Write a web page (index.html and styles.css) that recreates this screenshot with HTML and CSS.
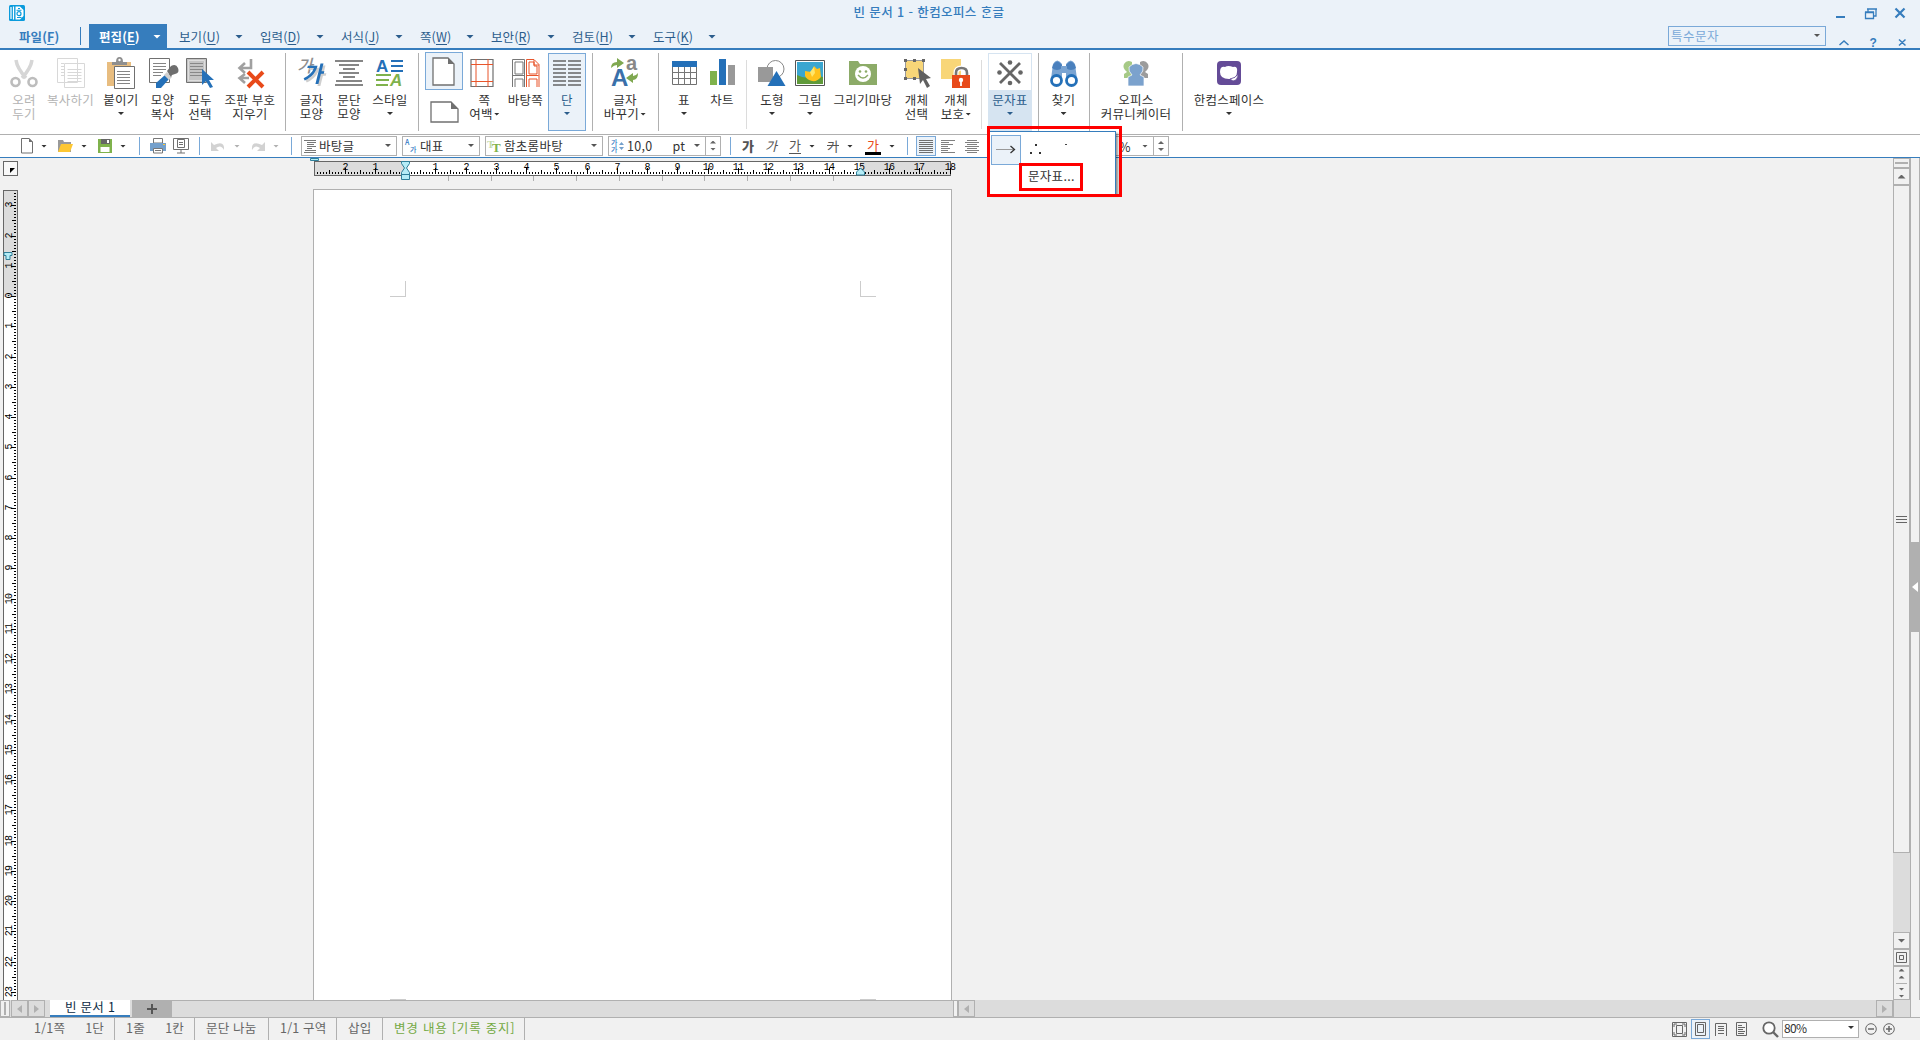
FILE: index.html
```
<!DOCTYPE html>
<html lang="ko">

<head>
  <meta charset="UTF-8">
  <meta name="viewport" content="width=device-width, initial-scale=1.0">
  <title>빈 문서 1 - 한컴오피스 ᄒᆞᆫ글</title>
  <link rel="stylesheet" href="styles.css">
</head>

<body>
  <div class="app">

    <!-- Title bar + menu -->
    <header class="header">
      <svg class="logo" width="16" height="16" viewBox="0 0 16 16">
        <rect width="16" height="16" rx="1.5" fill="#0a9bdc"/>
        <path d="M2 2v12M4.500 1.500v13" stroke="#fff" stroke-width="1.200"/>
        <path d="M6.500 1.500h4.500l3.500 3.500v6l-3.500 3.500h-4.500z" fill="#fff"/>
        <path d="M9 3.500h2M7.500 5.300h5M8 12.500h4.500" stroke="#0a9bdc" stroke-width="1.100"/>
        <circle cx="10" cy="8.700" r="2" fill="none" stroke="#0a9bdc" stroke-width="1.200"/>
      </svg>
      <div class="title">빈 문서 1 - 한컴오피스 ᄒᆞᆫ글</div>
      <nav class="menu">
        <span class="file">파일(<u>F</u>)</span>
        <span class="item active">편집(<u>E</u>)<i class="caret big"></i></span>
        <span class="item">보기(<u>U</u>)<i class="caret big"></i></span>
        <span class="item">입력(<u>D</u>)<i class="caret big"></i></span>
        <span class="item">서식(<u>J</u>)<i class="caret big"></i></span>
        <span class="item">쪽(<u>W</u>)<i class="caret big"></i></span>
        <span class="item">보안(<u>R</u>)<i class="caret big"></i></span>
        <span class="item">검토(<u>H</u>)<i class="caret big"></i></span>
        <span class="item">도구(<u>K</u>)<i class="caret big"></i></span>
      </nav>
      <div class="help-search">특수문자<i class="caret"></i></div>
      <svg class="win" width="76" height="48" viewBox="0 0 76 48" fill="none" stroke="#367dbd">
        <path d="M0 17h9" stroke-width="2"/>
        <path d="M32 12V9h8v7h-3M29.500 12.500h8v6h-8zM31 9h10M29 12h9" stroke-width="1.300"/>
        <path d="M59.500 8.500l9 9M68.500 8.500l-9 9" stroke-width="2.200"/>
        <path d="M3.500 45l4.500-4 4.500 4M63 39.500l6.500 6M69.500 39.500l-6.500 6" stroke-width="1.500"/>
        <text x="33.500" y="46.500" class="qmark">?</text>
      </svg>
    </header>

    <!-- Ribbon -->
    <div class="ribbon">
      <div class="btn off">
        <svg width="30" height="32" viewBox="0 0 30 32" fill="none"><path d="M7 3q1 8 10 18M23 3q-1 8-10 18" stroke="#d6d6d6" stroke-width="3.500"/><circle cx="6.500" cy="25" r="4" stroke="#bdbdbd" stroke-width="2.600"/><circle cx="23.500" cy="25" r="4" stroke="#bdbdbd" stroke-width="2.600"/></svg>
        오려<br>두기
      </div>
      <div class="btn off">
        <svg width="28" height="32" viewBox="0 0 28 32" fill="#fff" stroke="#d8d8d8"><path d="M.5 1.500h20v24H.5zM4 6.500h3M4 9.500h3M4 12.500h3M4 15.500h3M4 18.500h3M7.500 6.500h20v24h-20zM10.500 12.500h14M10.500 15.500h14M10.500 18.500h14M10.500 21.500h14M10.500 24.500h14"/></svg>
        복사하기
      </div>
      <div class="btn">
        <svg width="28" height="32" viewBox="0 0 28 32"><path d="M0 5h24v24H0z" fill="#e8bd80"/><path d="M5 8V5h4q0-5 3.500-5T16 5h4v3z" fill="#8f8f8f"/><circle cx="12.500" cy="3" r="1.200" fill="#fff"/><path d="M7.500 9.500h20v22h-20z" fill="#fff" stroke="#707070"/><path d="M10 14.500h13M10 17.500h13M10 20.500h13M10 23.500h13M10 26.500h13" stroke="#858585"/></svg>
        붙이기<i class="caret"></i>
      </div>
      <div class="btn">
        <svg width="30" height="32" viewBox="0 0 30 32"><path d="M1.500 1.500h20v24h-20z" fill="#fff" stroke="#707070"/><path d="M5 6.500h13M5 9.500h13M5 12.500h13M5 15.500h10M5 18.500h8" stroke="#858585"/><path d="M8 31v-5l9-8 4 4-8 9z" fill="#2470b8"/><path d="M16 18l3-3 5 5-3 3z" fill="#d0d0d0"/><path d="M19 14l4-5q5-3 7 2t-3 6l-3 1-1 2z" fill="#6e6e6e"/></svg>
        모양<br>복사
      </div>
      <div class="btn">
        <svg width="28" height="32" viewBox="0 0 28 32"><path d="M.5 1.500h20v24H.5z" fill="#c4c4c4" stroke="#707070"/><path d="M4 6.500h13M4 9.500h13M4 12.500h13M4 15.500h12M4 18.500h12" stroke="#888"/><path d="M2.500 3.500h16v20h-16z" fill="none" stroke="#dedede"/><path d="M16 12l12 11h-5l4 7-3 1-4-7-4 4z" fill="#2470b8"/></svg>
        모두<br>선택
      </div>
      <div class="btn">
        <svg width="28" height="32" viewBox="0 0 28 32" fill="none"><path d="M15 2v9H4M9 6l-5.500 5L9 16M13 21H4M9 17l-5.500 4L9 26" stroke="#a0a0a0" stroke-width="2.600"/><path d="M12 15l15 15M27 15L12 30" stroke="#e84a1a" stroke-width="4"/></svg>
        조판 부호<br>지우기
      </div>
      <div class="sep"></div>
      <div class="btn">
        <svg width="30" height="32" viewBox="0 0 30 32"><text x="0" y="15" class="ga gray">가</text><text x="5" y="25" class="ga blue">가</text></svg>
        글자<br>모양
      </div>
      <div class="btn">
        <svg width="28" height="32" viewBox="0 0 28 32"><path d="M0 4h28M4 8h20M8 12h12M4 16h20M8 20h12M1 24h26M0 28h28" stroke="#5f5f5f" stroke-width="1.700"/></svg>
        문단<br>모양
      </div>
      <div class="btn">
        <svg width="28" height="32" viewBox="0 0 28 32"><text x="0" y="15" class="style-a">A</text><text x="14" y="29" class="style-b">A</text><path d="M15 4h12M15 9h12M15 14h12" stroke="#2470b8" stroke-width="2"/><path d="M0 18h15M0 23h13M0 28h12" stroke="#7fb24c" stroke-width="2"/></svg>
        스타일<i class="caret"></i>
      </div>
      <div class="sep"></div>
      <div class="pages">
        <div class="portrait"><svg width="24" height="30" viewBox="0 0 24 30"><path d="M1 1h15l6 6v21H1z" fill="#fff" stroke="#707070" stroke-width="1.300"/><path d="M16 1v6h6z" fill="#707070"/></svg></div>
        <svg width="29" height="24" viewBox="0 0 29 24"><path d="M1 1h20l7 7v13H1z" fill="#fff" stroke="#707070" stroke-width="1.300"/><path d="M21 1v7h7z" fill="#707070"/></svg>
      </div>
      <div class="btn">
        <svg class="nudge" width="24" height="32" viewBox="0 0 24 32" fill="none"><path d="M1 2.500h22v27H1z" stroke="#707070" stroke-width="1.200"/><path d="M6 2v28M18 2v28M1 7.500h22M1 24.500h22" stroke="#e8552b"/></svg>
        쪽<br><span class="row">여백<i class="caret"></i></span>
      </div>
      <div class="btn">
        <svg width="28" height="32" viewBox="0 0 28 32" fill="none"><path d="M.5 30V2.500h12V30M.5 18.500h12M3 5h8v12H3zM3 30v-8h8v8" stroke="#777"/><path d="M14.500 30V2.500H22l5 5V30M14.500 18.500h12M17 5h5v4h3v8h-8zM17 30v-8h8v8M22 3v5h5" stroke="#e8552b"/></svg>
        바탕쪽
      </div>
      <div class="btn picked">
        <svg width="28" height="32" viewBox="0 0 28 32"><path d="M0 4h13M15 4h13M0 8h13M15 8h13M0 12h13M15 12h13M0 16h13M15 16h13M0 20h13M15 20h13M0 24h13M15 24h13M0 28h13M15 28h13" stroke="#666" stroke-width="1.700"/></svg>
        단<i class="caret"></i>
      </div>
      <div class="sep"></div>
      <div class="btn">
        <svg width="28" height="32" viewBox="0 0 28 32"><text x="0" y="29" class="chg-a">A</text><text x="15" y="13" class="chg-b">a</text><path d="M0 11q0-6 6-6V1l7 5-7 5V8q-3 0-6 3z" fill="#7fa850"/><path d="M27 16q0 7-5 7v3l-7-5 7-5v3q3 0 5-3z" fill="#7fa850"/></svg>
        글자<br><span class="row">바꾸기<i class="caret"></i></span>
      </div>
      <div class="sep"></div>
      <div class="btn">
        <svg width="25" height="32" viewBox="0 0 25 32"><path d="M.5 4.500h24v23H.5z" fill="#fff" stroke="#707070"/><path d="M0 15.500h25M0 21.500h25M6.500 10v18M12.500 10v18M18.500 10v18" stroke="#777"/><path d="M0 4h25v6H0z" fill="#2470b8"/></svg>
        표<i class="caret"></i>
      </div>
      <div class="btn">
        <svg width="25" height="32" viewBox="0 0 25 32"><path d="M0 14h7v14H0z" fill="#7fb24c"/><path d="M9 2h7v26H9z" fill="#2470b8"/><path d="M18 8h7v20h-7z" fill="#999"/></svg>
        차트
      </div>
      <div class="sep light"></div>
      <div class="btn">
        <svg width="28" height="32" viewBox="0 0 28 32"><circle cx="17.500" cy="12" r="8.500" fill="#fff" stroke="#888"/><path d="M0 10h15v15H0z" fill="#999"/><path d="M18.500 14l9 15h-18z" fill="#2470b8"/></svg>
        도형<i class="caret"></i>
      </div>
      <div class="btn">
        <svg width="30" height="32" viewBox="0 0 30 32"><path d="M.5 3.500h29v25H.5z" fill="#fff" stroke="#555"/><path d="M2 5h26v22H2z" fill="#3aa6d0"/><path d="M2 18q8 4 14 2t12 0v7H2z" fill="#5f9a3a"/><path d="M10 14l6 1 3-6 3 3 3-1 1 9q-4 5-9 4t-7-5z" fill="#ffc21d"/><path d="M15 15l4-5 1 6-3 4" fill="#ffe66b"/></svg>
        그림<i class="caret"></i>
      </div>
      <div class="btn">
        <svg width="28" height="32" viewBox="0 0 28 32"><path d="M0 4h9l2 3h17v21H0z" fill="#8cab68"/><circle cx="14" cy="17" r="8" fill="#fff"/><circle cx="11" cy="14.500" r="1.300" fill="#8cab68"/><circle cx="17" cy="14.500" r="1.300" fill="#8cab68"/><path d="M9 18q5 6 10 0" fill="none" stroke="#8cab68" stroke-width="1.400"/></svg>
        그리기마당
      </div>
      <div class="btn">
        <svg width="28" height="32" viewBox="0 0 28 32"><path d="M2.500 3.500h18v18h-18z" fill="#f8d678" stroke="#999"/><path d="M1 2h3v3H1zM10 2h3v3h-3zM19 2h3v3h-3zM1 11h3v3H1zM1 20h3v3H1zM10 20h3v3h-3z" fill="#666"/><path d="M15 11l13 10-5 1 4 7-3 2-4-8-3 4z" fill="#606060"/></svg>
        개체<br>선택
      </div>
      <div class="btn">
        <svg width="30" height="32" viewBox="0 0 30 32"><path d="M0 2h20v20H0z" fill="#f8d678"/><path d="M15 19v-3q0-5 5.500-5t5.500 5v3" fill="none" stroke="#fff" stroke-width="5"/><path d="M15 19v-3q0-5 5.500-5t5.500 5v3" fill="none" stroke="#777" stroke-width="2.600"/><path d="M11 18h18v13H11z" fill="#e84a1a"/><circle cx="20" cy="23" r="2.200" fill="#fff"/><path d="M20 23v6" stroke="#fff" stroke-width="1.800"/></svg>
        개체<br><span class="row">보호<i class="caret"></i></span>
      </div>
      <div class="sep light"></div>
      <div class="btn hover">
        <svg width="26" height="32" viewBox="0 0 26 32"><path d="M3 6l20 20M23 6L3 26" stroke="#666" stroke-width="2.800"/><g fill="#666"><circle cx="13" cy="5.500" r="2.300"/><circle cx="13" cy="26" r="2.300"/><circle cx="2.500" cy="15.500" r="2.300"/><circle cx="23.500" cy="15.500" r="2.300"/></g></svg>
        문자표<i class="caret"></i>
      </div>
      <div class="sep"></div>
      <div class="btn">
        <svg width="28" height="32" viewBox="0 0 28 32"><path d="M3 7q4-7 9 0v15H1zM25 7q-4-7-9 0v15h11z" fill="#7aa4d2"/><path d="M3 8q4-7 9 0v3q-5 4-10 0zM25 8q-4-7-9 0v3q5 4 10 0z" fill="#4a80bd"/><path d="M11 9h6v7h-6z" fill="#7aa4d2"/><circle cx="6.500" cy="23.500" r="5" fill="#fff" stroke="#2470b8" stroke-width="2.800"/><circle cx="21.500" cy="23.500" r="5" fill="#fff" stroke="#2470b8" stroke-width="2.800"/></svg>
        찾기<i class="caret"></i>
      </div>
      <div class="sep"></div>
      <div class="btn">
        <svg width="28" height="32" viewBox="0 0 28 32"><path d="M2 21v-4l3-2q-5-4-3-8 3-5 8-2v16z" fill="#a6c986"/><path d="M26 21v-4l-3-2q5-4 3-8-3-5-8-2v16z" fill="#9c9c9c"/><path d="M6 29v-9l4-2q-4-4-3-8 7-7 14 0 1 4-3 8l4 2v9z" fill="#7ba2cd" stroke="#fff" stroke-width=".7"/></svg>
        오피스<br>커뮤니케이터
      </div>
      <div class="sep"></div>
      <div class="btn">
        <svg width="24" height="32" viewBox="0 0 24 32"><rect y="4" width="24" height="24" rx="4" fill="#644b97"/><path d="M3 15q0-6 5-5 3-2 8 0 5-1 4 5 0 7-8 7-9 0-9-7z" fill="#fff"/><path d="M13 22q6-1 8-5 0 6-5 7z" fill="#fff" stroke="#644b97" stroke-width=".8"/></svg>
        한컴스페이스<i class="caret"></i>
      </div>
    </div>

    <!-- Formatting bar -->
    <div class="tools">
      <div class="tool"><svg width="12" height="16" viewBox="0 0 12 16"><path d="M.5.500H8L11.500 4v11H.5z" fill="#fff" stroke="#707070"/><path d="M8 0v4h4z" fill="#707070"/></svg><i class="caret"></i></div>
      <div class="tool"><svg width="15" height="14" viewBox="0 0 15 14"><path d="M0 1h5l1 2h7v10H0z" fill="#999"/><path d="M3 5h12l-3 8H0z" fill="#fdc733"/></svg><i class="caret"></i></div>
      <div class="tool"><svg width="14" height="14" viewBox="0 0 14 14"><path d="M0 0h14v14H0z" fill="#7fb24c"/><path d="M3 0h9v5H3z" fill="#666"/><path d="M9 1h2v3H9z" fill="#fff"/><path d="M2.500 8h9v5h-9z" fill="#fff"/></svg><i class="caret"></i></div>
      <div class="bar"></div>
      <div class="tool"><svg width="16" height="16" viewBox="0 0 16 16"><path d="M3.500.500h9V5h-9z" fill="#fff" stroke="#777"/><path d="M0 5h16v8H0z" fill="#74a0cc"/><path d="M3.500 10.500h9v4.500h-9z" fill="#fff" stroke="#777"/><path d="M5 12.500h6" stroke="#777"/><path d="M13 6h2v1h-2z" fill="#fdc733"/></svg></div>
      <div class="tool"><svg width="16" height="16" viewBox="0 0 16 16" fill="none" stroke="#707070"><path d="M.5.500h15v11H.5zM4.500 1.500h7v8h-7zM6 4.500h4M6 6.500h4M8 12v3M4 15h8"/></svg></div>
      <div class="bar"></div>
      <div class="tool dim"><svg width="15" height="12" viewBox="0 0 15 12"><path d="M0 2v9h8L5 8q5-4 8 2Q14 0 3 5z" fill="#d2d2d2"/></svg><i class="caret"></i></div>
      <div class="tool dim"><svg width="15" height="12" viewBox="0 0 15 12"><path d="M15 2v9H7l3-3Q5 4 2 10 1 0 12 5z" fill="#d2d2d2"/></svg><i class="caret"></i></div>
      <div class="bar"></div>
      <div class="combo c-style"><svg width="13" height="14" viewBox="0 0 13 14"><path d="M0 1.500h12M3 3.500h9M3 5.500h7M3 7.500h9M3 9.500h5M1 11.500h11M0 13.500h12" stroke="#777"/></svg>바탕글<i class="caret"></i></div>
      <div class="combo c-lang"><svg width="13" height="14" viewBox="0 0 13 14"><text x="0" y="6" class="mini">A</text><text x="5" y="13" class="mini">가</text></svg>대표<i class="caret"></i></div>
      <div class="combo c-font"><svg width="14" height="14" viewBox="0 0 14 14"><text x="-1" y="9" class="tt pale">T</text><text x="4" y="13" class="tt">T</text></svg>함초롬바탕<i class="caret"></i></div>
      <div class="combo c-size"><svg width="14" height="14" viewBox="0 0 14 14"><text x="0" y="6" class="mini">가</text><text x="0" y="13" class="mini">가</text><path d="M8 6l2.500-3L13 6zM8 8h5l-2.500 3z" fill="#74a0cc"/></svg>10,0<span class="pt">pt</span><i class="caret"></i><span class="spin"><i class="caret up"></i><i class="caret"></i></span></div>
      <div class="bar"></div>
      <div class="tool ch"><b>가</b></div>
      <div class="tool ch"><em>가</em></div>
      <div class="tool ch"><span class="under">가</span><i class="caret"></i></div>
      <div class="tool ch"><s>가</s><i class="caret"></i></div>
      <div class="tool ch"><span class="color">가</span><i class="caret"></i></div>
      <div class="bar"></div>
      <div class="tool align on"><svg width="14" height="14" viewBox="0 0 14 14"><path d="M0 1.500h14M0 3.500h14M0 5.500h14M0 7.500h14M0 9.500h14M0 11.500h14M0 13.500h14" stroke="#707070"/></svg></div>
      <div class="tool"><svg width="14" height="14" viewBox="0 0 14 14"><path d="M0 1.500h14M0 3.500h8M0 5.500h12M0 7.500h7M0 9.500h9M0 11.500h7M0 13.500h14" stroke="#808080"/></svg></div>
      <div class="tool"><svg width="14" height="14" viewBox="0 0 14 14"><path d="M2 1.500h10M0 3.500h14M2 5.500h10M0 7.500h14M2 9.500h10M0 11.500h14M2 13.500h10" stroke="#808080"/></svg></div>
      <div class="combo c-line">%<i class="caret"></i><span class="spin"><i class="caret up"></i><i class="caret"></i></span></div>
    </div>

    <!-- Document area -->
    <main class="work">
      <div class="left">
        <div class="corner"><svg width="13" height="13" viewBox="0 0 13 13"><path d="M6 6h5L6 11z"/></svg></div>
        <div class="vruler"><svg id="vruler" width="13" height="811"></svg></div>
      </div>
      <div class="doc">
        <div class="hruler"><svg id="hruler" width="644" height="22"></svg></div>
        <div class="page">
          <span class="crop tl"></span>
          <span class="crop tr"></span>
          <span class="crop bl"></span>
          <span class="crop br"></span>
        </div>
      </div>
      <div class="vscroll">
        <div class="grip"></div>
        <div class="cell"><i class="caret up big"></i></div>
        <div class="thumb"><span></span></div>
        <div class="trough"></div>
        <div class="cell"><i class="caret big"></i></div>
        <div class="cell"><svg width="11" height="11" viewBox="0 0 11 11" fill="none" stroke="#666"><path d="M.5.500h10v10H.5zM3.500 3.500h4v4h-4z"/></svg></div>
        <div class="cell nav"><i class="caret up"></i><i class="caret up"></i><hr><i class="caret"></i><i class="caret"></i></div>
      </div>
      <div class="panel"><div class="handle"><svg width="6" height="10" viewBox="0 0 6 10"><path d="M6 0v10L0 5z" fill="#fff"/></svg></div></div>
    </main>

    <!-- Document tabs -->
    <div class="tabs">
      <div class="grab"></div>
      <div class="arrow"><svg width="5" height="8" viewBox="0 0 5 8"><path d="M5 0v8L0 4z"/></svg></div>
      <div class="arrow"><svg width="5" height="8" viewBox="0 0 5 8"><path d="M0 0v8l5-4z"/></svg></div>
      <div class="tab">빈 문서 1</div>
      <div class="add"><svg width="10" height="10" viewBox="0 0 10 10"><path d="M0 5h10M5 0v10" stroke="#555" stroke-width="2"/></svg></div>
      <div class="rest"></div>
      <div class="split"></div>
      <div class="arrow"><svg width="5" height="8" viewBox="0 0 5 8"><path d="M5 0v8L0 4z"/></svg></div>
      <div class="hscroll"></div>
      <div class="arrow"><svg width="5" height="8" viewBox="0 0 5 8"><path d="M0 0v8l5-4z"/></svg></div>
      <div class="end"></div>
    </div>

    <!-- Status bar -->
    <footer class="status">
      <div class="pos"><span>1/1쪽</span><span>1단</span></div>
      <div class="pos2"><span>1줄</span><span>1칸</span></div>
      <div class="s-para">문단 나눔</div>
      <div class="s-sec">1/1 구역</div>
      <div class="s-ins">삽입</div>
      <div class="s-track">변경 내용 [기록 중지]</div>
      <div class="view">
        <svg width="15" height="15" viewBox="0 0 15 15" fill="none" stroke="#666"><path d="M.5.500h14v14H.5zM4.500 3.500h6v8h-6zM2 5V2h3M10 2h3v3M2 10v3h3M10 13h3v-3"/></svg>
        <span class="on"><svg width="13" height="14" viewBox="0 0 13 14" fill="none" stroke="#666"><path d="M1.500.500h10v13h-10zM3.500 2.500h6v8h-6z"/></svg></span>
        <svg class="v3" width="12" height="14" viewBox="0 0 12 14" fill="none" stroke="#666"><path d="M.5 14V1.500h11V14M3 4.500h6M3 6.500h6M3 8.500h6M3 11.500h6"/></svg>
        <svg class="v4" width="11" height="14" viewBox="0 0 11 14" fill="none" stroke="#666"><path d="M.5.500h10v13H.5zM2 3.500h4M2 5.500h7M2 7.500h5M2 9.500h7M2 11.500h6"/></svg>
        <svg class="v5" width="17" height="17" viewBox="0 0 17 17" fill="none" stroke="#666"><circle cx="7" cy="7" r="5.700" fill="#fff" stroke-width="1.800"/><path d="M11 11l5 5" stroke-width="2.400"/></svg>
        <div class="zoom">80%<i class="caret"></i></div>
        <svg class="v6" width="12" height="12" viewBox="0 0 12 12" fill="none" stroke="#666"><circle cx="6" cy="6" r="5.300"/><path d="M3 6h6" stroke-width="1.500"/></svg>
        <svg class="v7" width="12" height="12" viewBox="0 0 12 12" fill="none" stroke="#666"><circle cx="6" cy="6" r="5.300"/><path d="M3 6h6M6 3v6" stroke-width="1.500"/></svg>
      </div>
    </footer>

    <!-- Symbol table dropdown -->
    <div class="popup">
      <div class="recent">
        <span class="sym on"><svg width="20" height="9" viewBox="0 0 20 9" fill="none"><path d="M0 4.500h18" stroke="#999"/><path d="M14.500 1l4 3.500-4 3.500" stroke="#333" stroke-width="1.300"/></svg></span>
        <span class="sym"><svg width="12" height="11" viewBox="0 0 12 11"><path d="M5 0h2v2H5zM0 8h2v2H0zM9 8h2v2H9z" fill="#333"/></svg></span>
        <span class="sym"><svg width="12" height="14" viewBox="0 0 12 14"><path d="M5 2h2v1H5z" fill="#444"/></svg></span>
      </div>
      <div class="more">문자표...</div>
    </div>
    <div class="mark mark-outer"></div>
    <div class="mark mark-inner"></div>
  </div>

  <script>
    // 1cm at 80% zoom
    const CM = 30.25;
    const NS = 'http://www.w3.org/2000/svg';

    function add(svg, name, attrs, text) {
      const el = document.createElementNS(NS, name);
      for (const key in attrs) el.setAttribute(key, attrs[key]);
      if (text !== undefined) el.textContent = text;
      svg.appendChild(el);
      return el;
    }

    // Horizontal ruler
    const h = document.getElementById('hruler');
    add(h, 'rect', { x: 0.5, y: 0.5, width: 636, height: 14, fill: '#fff', stroke: '#666' });
    add(h, 'rect', { x: 1, y: 1, width: 90, height: 13, fill: '#dcdcdc' });
    add(h, 'rect', { x: 546, y: 1, width: 90, height: 13, fill: '#dcdcdc' });
    for (let i = -29; i <= 180; i++) {
      const x = Math.round(91 + i * CM / 10);
      const len = i % 10 === 0 ? 6 : i % 5 === 0 ? 4 : 2;
      add(h, 'rect', { x: x, y: 13 - len, width: 1, height: len });
      if (i % 10 === 0 && i !== 0) add(h, 'text', { x: x, y: 9, class: 'num' }, Math.abs(i / 10));
    }
    for (let i = 1; i <= 10; i++) {
      add(h, 'rect', { x: Math.round(91 + i * 42.75), y: 15, width: 1, height: 5, fill: '#b0b0b0' });
    }
    add(h, 'path', { d: 'M87.500 0.500h8v2l-3 4.500 3 4.500v7h-8v-7l3-4.500-3-4.500zM87.500 13.500h8', class: 'knob' });
    add(h, 'path', { d: 'M542.500 14v-3l4-4 4 4v3z', class: 'knob' });
    add(h, 'path', { d: 'M-3.500 -2.500h8v2h-8z', class: 'knob' });

    // Vertical ruler
    const v = document.getElementById('vruler');
    add(v, 'rect', { x: 0, y: 0, width: 13, height: 106, fill: '#dcdcdc' });
    for (let i = -34; i <= 231; i++) {
      const y = Math.round(105 + i * CM / 10);
      const len = i % 10 === 0 ? 5 : i % 5 === 0 ? 4 : 2;
      add(v, 'rect', { x: 12 - len, y: y, width: len, height: 1 });
      if (i % 10 === 0) {
        add(v, 'text', { x: 0, y: 0, class: 'num', transform: 'translate(8 ' + y + ') rotate(-90)' }, Math.abs(i / 10));
      }
    }
    add(v, 'path', { d: 'M0 61.500h8v3h-2v4H2v-4H0z', class: 'knob' });
  </script>
</body>

</html>
```
FILE: styles.css
```
* {
  box-sizing: border-box;
}

body {
  margin: 0;
  font-family: 'Noto Sans CJK KR', sans-serif;
  font-size: 12.5px;
  overflow: hidden;
  color: #333;
}

svg {
  display: block;
  flex: none;
  overflow: visible;
}

.app {
  position: relative;
  display: flex;
  flex-direction: column;
  width: 1920px;
  height: 1040px;
  overflow: hidden;
  background: #f1f1f1;
}

/* Small triangle used by every dropdown */
.caret {
  display: block;
  flex: none;
  width: 6px;
  height: 3px;
  background: currentColor;
  clip-path: polygon(0 0, 100% 0, 50% 100%);
}

.caret.big {
  width: 8px;
  height: 4px;
}

.caret.up {
  clip-path: polygon(0 100%, 100% 100%, 50% 0);
}

/* Title and menu */
.header {
  display: grid;
  grid-template-columns: 1fr 158px 94px;
  grid-template-rows: 24px 24px;
  height: 50px;
  background: #ebf2f9;
  border-bottom: 2px solid #367dbd;
  position: relative;
}

.logo {
  position: absolute;
  left: 9px;
  top: 5px;
}

.title {
  grid-column: 1 / -1;
  padding-right: 62px;
  text-align: center;
  line-height: 24px;
  font-weight: 500;
  letter-spacing: 0.4px;
  color: #367dbd;
}

.menu {
  display: grid;
  grid-template-columns: 89px 78px 93px 81px 79px 71px 81px 81px 80px;
  line-height: 25px;
  color: #2b5d8c;
  letter-spacing: 0.1px;
}

.menu u {
  text-underline-offset: 2px;
}

.menu .item {
  display: flex;
  align-items: center;
  padding-right: 17px;
}

.menu .item:nth-child(3) {
  padding-left: 12px;
}

.menu .caret {
  margin-left: auto;
}

.menu .file {
  padding-left: 19px;
  font-weight: 700;
  color: #367dbd;
  background: linear-gradient(#367dbd, #367dbd) 80px 3px / 1px 18px no-repeat;
}

.menu .active {
  padding: 0 6px 0 10px;
  background: #367dbd;
  color: #fff;
  font-weight: 700;
}

.help-search {
  display: flex;
  align-items: center;
  justify-content: space-between;
  height: 20px;
  margin-top: 2px;
  padding: 0 5px 1px 2px;
  border: 1px solid #7aa9d8;
  letter-spacing: 0.5px;
  color: #7aa9d8;
}

.help-search .caret {
  color: #555;
}

.win {
  position: absolute;
  left: 1836px;
  top: 0;
}

.qmark {
  font: bold 12px 'Liberation Sans', sans-serif;
  fill: #367dbd;
  stroke: none;
}

/* Ribbon */
.ribbon {
  display: grid;
  grid-template-columns:
    40px 53px 48px 35px 40px 60px 10px
    43px 32px 50px 7px
    44px 37px 45px 38px 13px
    52px 15px
    36px 40px 9px
    42px 34px 72px 35px 44px 7px
    50px 7px 43px 9px 84px 9px 84px;
  height: 85px;
  padding: 3px 0 3px 4px;
  background: #fff;
  border-bottom: 1px solid #b0b0b0;
}

.btn {
  padding-top: 4px;
  text-align: center;
  line-height: 14px;
  white-space: nowrap;
  letter-spacing: 0.25px;
}

.btn svg {
  margin: 0 auto 4px;
}

.btn svg.nudge {
  margin-left: 4px;
}

.btn > .caret {
  margin: 5px auto 0;
}

.btn .row {
  display: flex;
  align-items: center;
  justify-content: center;
  gap: 1px;
}

.off {
  color: #b4b4b4;
}

.picked {
  padding-top: 3px;
  background: #ebf2f9;
  border: 1px solid #7aa9d8;
  color: #2b5d8c;
}

.hover {
  width: 44px;
  margin: 0 auto;
  background: linear-gradient(#fff, #fff) 1px 1px / 42px 36px no-repeat, #d6e4f1;
  color: #2b5d8c;
}

.sep {
  width: 1px;
  margin: 0 auto;
  background: #b0b0b0;
}

.sep.light {
  margin: 7px auto 2px;
  background: #dcdcdc;
}

.pages {
  display: flex;
  flex-direction: column;
  align-items: center;
  gap: 11px;
  margin-top: -1px;
}

.portrait {
  display: flex;
  justify-content: center;
  width: 38px;
  height: 38px;
  padding-top: 4px;
  background: #ebf2f9;
  border: 1px solid #7aa9d8;
}

.ga {
  font-size: 22px;
  font-weight: 700;
  font-style: italic;
}

.gray {
  font-size: 17px;
  font-weight: 500;
  fill: #8f8f8f;
}

.blue {
  fill: #2470b8;
  filter: drop-shadow(2px 2px 0 #cfcfcf);
}

.style-a,
.style-b,
.chg-a,
.chg-b {
  font: bold 17px 'Liberation Sans', sans-serif;
  fill: #2470b8;
}

.style-b {
  font-style: italic;
  fill: #7fb24c;
}

.chg-a {
  font-size: 24px;
  fill: #3a70aa;
}

.chg-b {
  font-size: 20px;
  fill: #888;
}

/* Formatting bar */
.tools {
  display: grid;
  grid-template-columns:
    37px 40px 41px 11px 23px 26px 12px 39px 41px 10px
    101px 83px 123px 122px 12px
    23px 24px 38px 38px 42px 9px
    25px 24px 74px 130px;
  height: 23px;
  padding-left: 21px;
  background: #fff;
  border-bottom: 1px solid #367dbd;
}

.tool {
  display: flex;
  align-items: center;
  gap: 8px;
}

.tool.dim {
  color: #b0b0b0;
}

.bar {
  width: 1px;
  margin: 2px 0;
  background: #7aa9d8;
}

.combo {
  display: flex;
  align-items: center;
  gap: 2px;
  height: 20px;
  margin-top: 1px;
  padding: 0 5px 1px 2px;
  border: 1px solid #b0b0b0;
  white-space: nowrap;
  letter-spacing: 0.3px;
}

.combo > .caret {
  margin-left: auto;
  color: #555;
}

.c-style {
  width: 96px;
}

.c-lang {
  width: 78px;
}

.c-font {
  width: 118px;
}

.c-size {
  width: 113px;
  padding-right: 0;
}

.c-line {
  padding: 0 0 0 79px;
}

.pt {
  margin-left: 18px;
}

.spin {
  display: flex;
  flex-direction: column;
  align-items: center;
  justify-content: space-around;
  width: 15px;
  height: 18px;
  margin-left: 3px;
  padding: 2px 0;
  border-left: 1px solid #b0b0b0;
  color: #666;
}

.mini {
  font-size: 7px;
  font-weight: 500;
  letter-spacing: 0;
  fill: #2f78c4;
}

.tt {
  font: bold 13px 'Liberation Serif', serif;
  fill: #7fb24c;
}

.tt.pale {
  font-size: 11px;
  fill: #c5dcae;
}

.ch {
  font-size: 13px;
  line-height: 16px;
  color: #555;
}

.ch .caret {
  color: #333;
}

.ch b {
  font-weight: 900;
}

.under {
  height: 16px;
  line-height: 14px;
  border-bottom: 1px solid #555;
}

.color {
  height: 17px;
  padding: 0 2px;
  line-height: 14px;
  color: #e84a1a;
  border-bottom: 3px solid #000;
}

.align.on {
  width: 20px;
  height: 20px;
  margin-top: 1px;
  padding-left: 2px;
  background: #ebf2f9;
  border: 1px solid #7aa9d8;
}

/* Work area */
.work {
  display: flex;
  height: 842px;
  overflow: hidden;
}

.left {
  width: 314px;
  padding: 3px 0 0 3px;
}

.corner {
  width: 15px;
  height: 15px;
  border: 1px solid #666;
  background: #f8f8f8;
}

.vruler {
  width: 15px;
  height: 811px;
  margin-top: 14px;
  border: 1px solid #666;
  border-bottom: 0;
  background: #fff;
}

.doc {
  flex: 1;
  padding-top: 3px;
}

.hruler {
  height: 28px;
}

.num {
  font: 10px 'Liberation Mono', monospace;
  letter-spacing: -0.8px;
  text-anchor: middle;
}

.knob {
  fill: #b5edf7;
  stroke: #2f7f99;
}

.page {
  position: relative;
  width: 639px;
  height: 811px;
  margin-left: -1px;
  background: #fff;
  border: 1px solid #b0b0b0;
  border-bottom: 0;
}

.crop {
  position: absolute;
  width: 16px;
  height: 16px;
  border: 0 solid #ccc;
}

.tl {
  left: 76px;
  top: 91px;
  border-width: 0 1px 1px 0;
}

.tr {
  left: 546px;
  top: 91px;
  border-width: 0 0 1px 1px;
}

.bl {
  left: 76px;
  bottom: 0;
  height: 1px;
  border-top-width: 1px;
}

.br {
  left: 546px;
  bottom: 0;
  height: 1px;
  border-top-width: 1px;
}

/* Vertical scrollbar and side panel */
.vscroll {
  display: flex;
  flex-direction: column;
  width: 17px;
  color: #666;
}

.grip {
  height: 10px;
  border: 1px solid #b0b0b0;
  background: linear-gradient(#b0b0b0, #b0b0b0) center / 13px 2px no-repeat;
}

.cell {
  display: flex;
  flex-direction: column;
  align-items: center;
  justify-content: center;
  height: 17px;
  border: 1px solid #b0b0b0;
}

.thumb {
  display: flex;
  align-items: center;
  justify-content: center;
  height: 668px;
  border: 1px solid #b0b0b0;
}

.thumb span {
  width: 11px;
  height: 7px;
  border: solid #666;
  border-width: 1px 0;
  background: linear-gradient(#666, #666) center / 11px 1px no-repeat;
}

.trough {
  flex: 1;
  background: #dcdcdc;
}

.nav {
  height: 34px;
  gap: 4px;
}

.nav hr {
  width: 11px;
  height: 1px;
  margin: 0;
  border: 0;
  background: #b0b0b0;
}

.panel {
  width: 10px;
  border: 1px solid #b0b0b0;
  border-width: 0 1px;
}

.handle {
  display: flex;
  align-items: center;
  justify-content: center;
  height: 90px;
  margin-top: 384px;
  background: #b0b0b0;
}

/* Tab strip */
.tabs {
  display: flex;
  height: 18px;
  background: #dcdcdc;
  border-bottom: 1px solid #b0b0b0;
}

.grab {
  width: 10px;
  margin-right: 1px;
  border: 1px solid #b0b0b0;
  background: linear-gradient(#b0b0b0, #b0b0b0) center / 2px 13px no-repeat, #f1f1f1;
}

.arrow {
  display: flex;
  align-items: center;
  justify-content: center;
  width: 17px;
  border: 1px solid #b0b0b0;
}

.arrow path {
  fill: #b0b0b0;
}

.tab {
  width: 80px;
  margin: 0 2px 0 5px;
  background: #fff;
  border-bottom: 2px solid #367dbd;
  text-align: center;
  line-height: 13px;
  letter-spacing: 0.3px;
  color: #0b2b45;
}

.add {
  display: flex;
  align-items: center;
  justify-content: center;
  width: 40px;
  background: #b0b0b0;
}

.rest {
  width: 781px;
  border-top: 1px solid #b0b0b0;
}

.split {
  width: 5px;
  border: 1px solid #b0b0b0;
  background: #f1f1f1;
}

.hscroll {
  flex: 1;
}

.end {
  width: 27px;
  border-left: 1px solid #b0b0b0;
  background: linear-gradient(#b0b0b0, #b0b0b0) 16px 0 / 1px 18px no-repeat, linear-gradient(90deg, #dcdcdc 16px, #f1f1f1 16px);
}

/* Status bar */
.status {
  display: grid;
  grid-template-columns: 115px 80px 74px 68px 46px 142px 1fr;
  height: 22px;
  line-height: 20px;
  color: #666;
  letter-spacing: 0.2px;
}

.status > div:not(.view) {
  padding-left: 11px;
  border-right: 1px solid #b0b0b0;
  white-space: nowrap;
}

.status > .pos:not(.view),
.status > .pos2:not(.view) {
  display: flex;
  justify-content: space-between;
  padding-right: 10px;
}

.status > .pos:not(.view) {
  padding-left: 34px;
}

.status > .s-track {
  color: #74a943;
  letter-spacing: 0.8px;
}

.view {
  display: flex;
  align-items: center;
  padding-left: 1147px;
}

.view .on {
  margin-left: 4px;
  padding: 2px;
  border: 1px solid #7aa9d8;
  background: #ebf2f9;
}

.v3 {
  margin-left: 5px;
}

.v4 {
  margin-left: 9px;
}

.v5 {
  margin: 0 3px 0 15px;
}

.zoom {
  display: flex;
  align-items: center;
  justify-content: space-between;
  width: 77px;
  height: 18px;
  padding: 0 4px 3px 1px;
  border: 1px solid #b0b0b0;
  background: #fff;
  font-size: 12px;
  letter-spacing: -0.6px;
  color: #333;
}

.v6 {
  margin-left: 6px;
}

.v7 {
  margin-left: 6px;
}

/* Symbol dropdown */
.popup {
  position: absolute;
  left: 990px;
  top: 131px;
  width: 126px;
  height: 63px;
  padding: 3px 1px;
  background: #fff;
  border: 1px solid #367dbd;
  border-width: 1px 1px 0 0;
  box-shadow: 2px 2px 2px rgba(0, 0, 0, 0.4);
}

.recent {
  display: flex;
}

.sym {
  display: flex;
  align-items: center;
  justify-content: center;
  width: 30px;
  height: 30px;
  padding-bottom: 2px;
}

.sym.on {
  background: #ebf2f9;
  border: 1px solid #7aa9d8;
}

.more {
  margin-left: 37px;
  line-height: 22px;
  letter-spacing: 0.3px;
}

.mark {
  position: absolute;
  border: 3px solid #f00;
}

.mark-outer {
  left: 987px;
  top: 126px;
  width: 135px;
  height: 71px;
}

.mark-inner {
  left: 1019px;
  top: 163px;
  width: 64px;
  height: 28px;
}
```
